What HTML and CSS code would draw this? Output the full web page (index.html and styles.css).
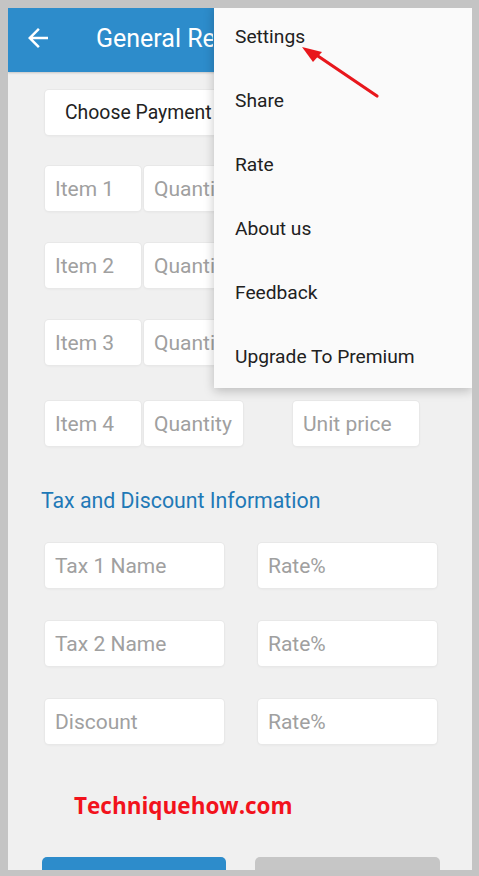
FILE: index.html
```html
<!DOCTYPE html>
<html>
<head>
<meta charset="utf-8">
<link rel="stylesheet" href="styles.css">
</head>
<body>
<div class="frame">
  <div class="app">
    <header class="topbar">
      <svg class="back" viewBox="0 0 24 24" width="30" height="30"><path d="M20 11H7.83l5.59-5.59L12 4l-8 8 8 8 1.41-1.41L7.83 13H20v-2z" fill="#fff"/></svg>
      <div class="title">General Receipt</div>
    </header>
    <main class="content">
      <div class="field choose"><span class="cut cut-choose">Choose Payment Method</span></div>
      <div class="row r1"><div class="field item">Item 1</div><div class="field qty"><span class="cut cut-qty">Quantity</span></div><div class="field price"></div></div>
      <div class="row"><div class="field item">Item 2</div><div class="field qty"><span class="cut cut-qty">Quantity</span></div><div class="field price"></div></div>
      <div class="row"><div class="field item">Item 3</div><div class="field qty"><span class="cut cut-qty">Quantity</span></div><div class="field price"></div></div>
      <div class="row r4"><div class="field item">Item 4</div><div class="field qty">Quantity</div><div class="field price">Unit price</div></div>
      <h2 class="section">Tax and Discount Information</h2>
      <div class="row tax t1"><div class="field half">Tax 1 Name</div><div class="field half">Rate%</div></div>
      <div class="row tax"><div class="field half">Tax 2 Name</div><div class="field half">Rate%</div></div>
      <div class="row tax"><div class="field half">Discount</div><div class="field half">Rate%</div></div>
      <div class="watermark">Techniquehow.com</div>
      <div class="buttons"><div class="btn primary"></div><div class="btn secondary"></div></div>
    </main>
    <nav class="menu">
      <div class="menu-item">Settings</div>
      <div class="menu-item">Share</div>
      <div class="menu-item">Rate</div>
      <div class="menu-item">About us</div>
      <div class="menu-item">Feedback</div>
      <div class="menu-item">Upgrade To Premium</div>
    </nav>
    <svg class="annot" viewBox="8 8 464 862" width="464" height="862">
      <line x1="377" y1="96" x2="312" y2="52" stroke="#e8171c" stroke-width="3.2" stroke-linecap="round"/>
      <polygon points="302,47 322,52 313,62" fill="#e8171c"/>
    </svg>
  </div>
</div>
</body>
</html>
```
FILE: styles.css
```css
* { box-sizing: border-box; }
html, body { margin: 0; padding: 0; }
body { background: #c4c4c4; font-family: Roboto, "Liberation Sans", sans-serif; }
.frame {
  width: 479px;
  height: 876px;
  padding: 8px 7px 6px 8px;
  background: #c4c4c4;
}
.app {
  position: relative;
  height: 862px;
  overflow: hidden;
  background: #f0f0f0;
}
.topbar {
  height: 64px;
  background: #2d8ccb;
  display: flex;
  align-items: center;
  box-shadow: 0 1px 2px rgba(0,0,0,0.18);
  position: relative;
  z-index: 1;
}
.back { margin-left: 15px; margin-top: -4px; display: block; }
.title {
  color: #fff;
  font-size: 25px;
  margin-left: 43px;
  margin-top: -4px;
  white-space: nowrap;
  width: 117px;
  overflow: hidden;
}
.content {
  padding: 18px 0 0 37px;
}
.field {
  background: #fff;
  border-radius: 4px;
  height: 45px;
  display: flex;
  align-items: center;
  padding-left: 10px;
  font-size: 21px;
  color: #a0a0a0;
  white-space: nowrap;
  overflow: hidden;
  box-shadow: 0 0 0 1px #e8e8e8, 0 1px 3px rgba(0,0,0,0.06);
}
.cut { display: block; overflow: hidden; white-space: nowrap; }
.cut-choose { width: 149px; }
.cut-qty { width: 60px; }
.choose { width: 260px; color: #222; font-size: 19.4px; padding-left: 20px; }
.row { display: flex; margin-top: 32px; }
.row.r1 { margin-top: 31px; }
.row.r4 { margin-top: 36px; }
.item { width: 96px; }
.qty { width: 99px; margin-left: 3px; }
.price { width: 126px; margin-left: 50px; }
.section {
  margin: 43px 0 0 -4px;
  font-size: 21.3px;
  font-weight: 400;
  line-height: 24px;
  color: #1f79b7;
}
.row.tax { margin-top: 33px; }
.row.tax.t1 { margin-top: 30px; }
.half { width: 179px; margin-right: 34px; }
.watermark {
  margin: 47px 0 0 29px;
  font-family: "Open Sans", "DejaVu Sans", sans-serif;
  font-weight: 700;
  font-size: 22.5px;
  line-height: 30px;
  color: #f2121c;
}
.buttons { display: flex; margin: 36px 0 0 -3px; }
.btn { height: 44px; border-radius: 5px; }
.primary { width: 184px; background: #2d8ccb; }
.secondary { width: 185px; margin-left: 29px; background: #c6c6c6; }
.menu {
  position: absolute;
  top: -4px;
  left: 206px;
  right: 0;
  background: #fafafa;
  box-shadow: 0 3px 10px rgba(0,0,0,0.22);
  z-index: 2;
}
.menu-item {
  height: 64px;
  display: flex;
  align-items: center;
  padding-left: 21px;
  font-size: 19.2px;
  color: #212121;
}
.annot { position: absolute; left: 0; top: 0; z-index: 3; pointer-events: none; }
```
